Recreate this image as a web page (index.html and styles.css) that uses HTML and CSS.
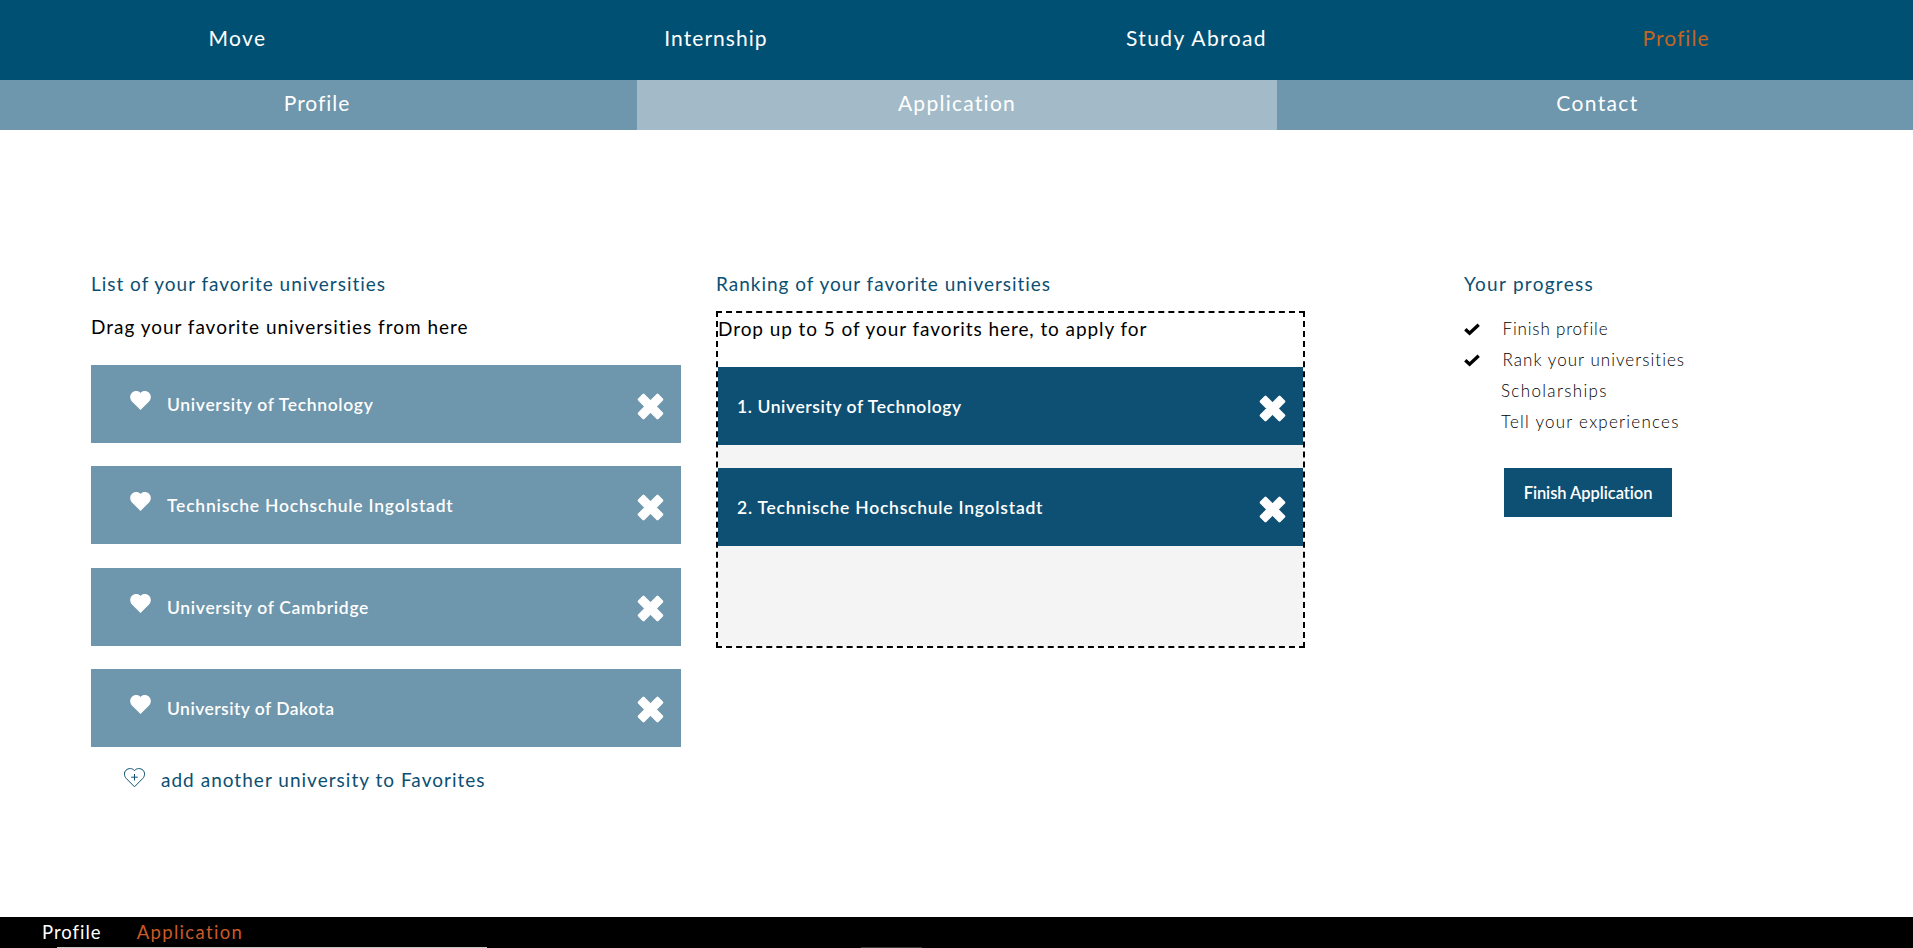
FILE: index.html
```html
<!DOCTYPE html>
<html lang="en">
<head>
<meta charset="utf-8">
<title>Application</title>
<link rel="stylesheet" href="styles.css">
</head>
<body>
<svg class="sprite" width="0" height="0">
  <symbol id="heart" viewBox="0 0 21 19"><path d="M10.5 18.9 2.2 10.8C-.5 8.200-.3 4 1.800 1.900 4.300-.5 8.300-.5 10.500 1.900 12.700-.5 16.700-.5 19.200 1.900 21.300 4 21.500 8.200 18.800 10.800Z"/></symbol>
  <symbol id="cross" viewBox="0 0 27 27"><path d="M6.500 2 13.500 8.900 20.500 2 25 6.500 18.100 13.500 25 20.500 20.500 25 13.500 18.100 6.500 25 2 20.500 8.900 13.500 2 6.500Z" fill="currentColor" stroke="currentColor" stroke-width="2.600" stroke-linejoin="round"/></symbol>
  <symbol id="check" viewBox="0 0 16 13"><path d="M1.300 6.200 5.600 10.300 14.700 1.700" fill="none" stroke="currentColor" stroke-width="3.300"/></symbol>
  <symbol id="heart-plus" viewBox="0 0 21 20"><path d="M10.500 18.800 2.300 10.500C-.1 8-.1 4.300 2 2.200 4.300 0 8.500-.1 10.500 2.700 12.500-.1 16.700 0 19 2.200 21.100 4.300 21.100 8 18.700 10.500ZM10.500 6V12.500M7.200 9.200H13.800" fill="none" stroke="currentColor" stroke-width="1"/></symbol>
</svg>

<nav class="mainnav">
  <a class="mainnav-link">Move</a>
  <a class="mainnav-link mainnav-link--tight">Internship</a>
  <a class="mainnav-link">Study Abroad</a>
  <a class="mainnav-link mainnav-link--tight mainnav-link--active">Profile</a>
</nav>
<nav class="subnav">
  <a class="subnav-link subnav-link--first">Profile</a>
  <a class="subnav-link subnav-link--active">Application</a>
  <a class="subnav-link subnav-link--last">Contact</a>
</nav>

<main class="content">
  <section class="favorites">
    <h2 class="title">List of your favorite universities</h2>
    <p class="hint">Drag your favorite universities from here</p>
    <ul class="cards">
      <li class="card"><svg class="heart"><use href="#heart"/></svg><span class="name">University of Technology</span><svg class="cross"><use href="#cross"/></svg></li>
      <li class="card"><svg class="heart"><use href="#heart"/></svg><span class="name name--wide">Technische Hochschule Ingolstadt</span><svg class="cross"><use href="#cross"/></svg></li>
      <li class="card"><svg class="heart"><use href="#heart"/></svg><span class="name">University of Cambridge</span><svg class="cross"><use href="#cross"/></svg></li>
      <li class="card"><svg class="heart"><use href="#heart"/></svg><span class="name name--narrow">University of Dakota</span><svg class="cross"><use href="#cross"/></svg></li>
    </ul>
    <a class="add"><svg class="add-icon"><use href="#heart-plus"/></svg>add another university to Favorites</a>
  </section>

  <section class="ranking">
    <h2 class="title">Ranking of your favorite universities</h2>
    <div class="dropzone">
      <p class="drop-hint">Drop up to 5 of your favorits here, to apply for</p>
      <ul class="cards">
        <li class="card card--ranked"><span class="name name--first">1. University of Technology</span><svg class="cross"><use href="#cross"/></svg></li>
        <li class="card card--ranked"><span class="name name--second">2. Technische Hochschule Ingolstadt</span><svg class="cross"><use href="#cross"/></svg></li>
      </ul>
    </div>
  </section>

  <section class="progress">
    <h2 class="title title--wide">Your progress</h2>
    <ul class="steps">
      <li class="step step--done step--profile"><svg class="check"><use href="#check"/></svg>Finish profile</li>
      <li class="step step--done"><svg class="check"><use href="#check"/></svg>Rank your universities</li>
      <li class="step step--scholarships">Scholarships</li>
      <li class="step step--experiences">Tell your experiences</li>
    </ul>
    <button class="finish">Finish Application</button>
  </section>
</main>

<footer class="footer">
  <a class="footer-link">Profile</a>
  <a class="footer-link footer-link--active">Application</a>
  <span class="edge edge--light"></span>
  <span class="edge edge--dark"></span>
</footer>
</body>
</html>
```
FILE: styles.css
```css
* { box-sizing: border-box; }
body {
  margin: 0;
  height: 948px;
  display: flex;
  flex-direction: column;
  overflow: hidden;
  background: #fff;
  color: #000;
  font-family: Lato, "Open Sans", sans-serif;
}
ul { margin: 0; padding: 0; list-style: none; }
h2, p { margin: 0; }
.sprite { position: absolute; }

.mainnav {
  height: 80px;
  display: grid;
  grid-template-columns: 475px 482px 479px 477px;
  background: #005073;
  color: #fff;
  font-size: 21px;
  line-height: 76px;
  letter-spacing: 1.4px;
  text-align: center;
}
.mainnav-link--tight { letter-spacing: 1.05px; }
.mainnav-link--active { color: #c4651f; padding-left: 3px; }

.subnav {
  height: 50px;
  display: grid;
  grid-template-columns: 637px 640px 636px;
  background: #6e96ac;
  color: #fff;
  font-size: 21px;
  line-height: 46px;
  letter-spacing: 1.27px;
  text-align: center;
}
.subnav-link--first { padding-right: 3px; letter-spacing: .95px; }
.subnav-link--active { background: #a3bbc8; }
.subnav-link--last { padding-left: 5px; letter-spacing: 1.35px; }

.content {
  flex: 1;
  padding: 142px 0 0 91px;
  display: grid;
  grid-template-columns: 590px 589px 300px;
  column-gap: 35px;
  align-items: start;
}
.progress { padding-left: 124px; width: 420px; }

.title, .hint, .drop-hint {
  font-size: 19px;
  font-weight: 400;
  line-height: 24px;
  letter-spacing: .98px;
  white-space: nowrap;
}
.title { color: #0c4f72; }
.title--wide { letter-spacing: 1.28px; }
.hint { margin: 19px 0 26px; }

.cards { display: flex; flex-direction: column; gap: 23.330px; }
.card {
  height: 78px;
  padding: 0 17px 0 39px;
  display: flex;
  background: #6e96ac;
  color: #fff;
}
.heart { width: 21px; height: 19px; margin: 26px 16px 0 0; fill: currentColor; }
.name {
  flex: 1;
  font-size: 17.500px;
  font-weight: 600;
  line-height: 80px;
  letter-spacing: .67px;
}
.name--wide { letter-spacing: .78px; }
.name--narrow { letter-spacing: .45px; }
.name--first { letter-spacing: .58px; }
.name--second { letter-spacing: .76px; }
.cross { width: 27px; height: 27px; margin-top: 27.500px; }

.add {
  margin-top: 21.500px;
  padding-left: 33px;
  display: flex;
  color: #0c4f72;
  font-size: 19px;
  line-height: 24px;
  letter-spacing: 1.02px;
}
.add-icon { width: 21px; height: 20px; margin-right: 16px; }

.dropzone {
  height: 337px;
  margin-top: 15px;
  border: 2px dashed #000;
}
.drop-hint { padding: 4px 0 26px; background: #fff; letter-spacing: .93px; }
.dropzone .cards { height: 279px; background: #f4f4f4; }
.card--ranked { background: #0e5073; padding: 0 17px 0 19px; }

.steps { margin-top: 17px; }
.step {
  padding-left: 37px;
  font-size: 17px;
  font-weight: 300;
  line-height: 31px;
  letter-spacing: 1.04px;
}
.step--done { padding-left: 0; display: flex; }
.step--profile { letter-spacing: .84px; }
.step--scholarships { letter-spacing: 1.35px; }
.step--experiences { letter-spacing: 1.24px; }
.check { width: 16px; height: 13px; margin: 9.500px 22.500px 0 0; }

.finish {
  display: block;
  width: 168px;
  height: 49px;
  margin: 31px 0 0 40px;
  padding: 0;
  border: 0;
  background: #0e5073;
  color: #fff;
  font: 600 16.500px/50px Lato, "Open Sans", sans-serif;
  letter-spacing: -.05px;
}

.footer {
  position: relative;
  height: 31px;
  padding-left: 42px;
  display: flex;
  gap: 35px;
  overflow: hidden;
  background: #000;
  color: #fff;
  font-size: 18.500px;
  line-height: 31px;
  letter-spacing: 1px;
}
.footer-link--active { color: #c95a28; letter-spacing: 1.340px; }
.edge { position: absolute; bottom: 0; height: 1px; }
.edge--light { left: 57px; width: 430px; background: #c4c4c4; }
.edge--dark { left: 861px; width: 61px; background: #3a3a3a; }
```
